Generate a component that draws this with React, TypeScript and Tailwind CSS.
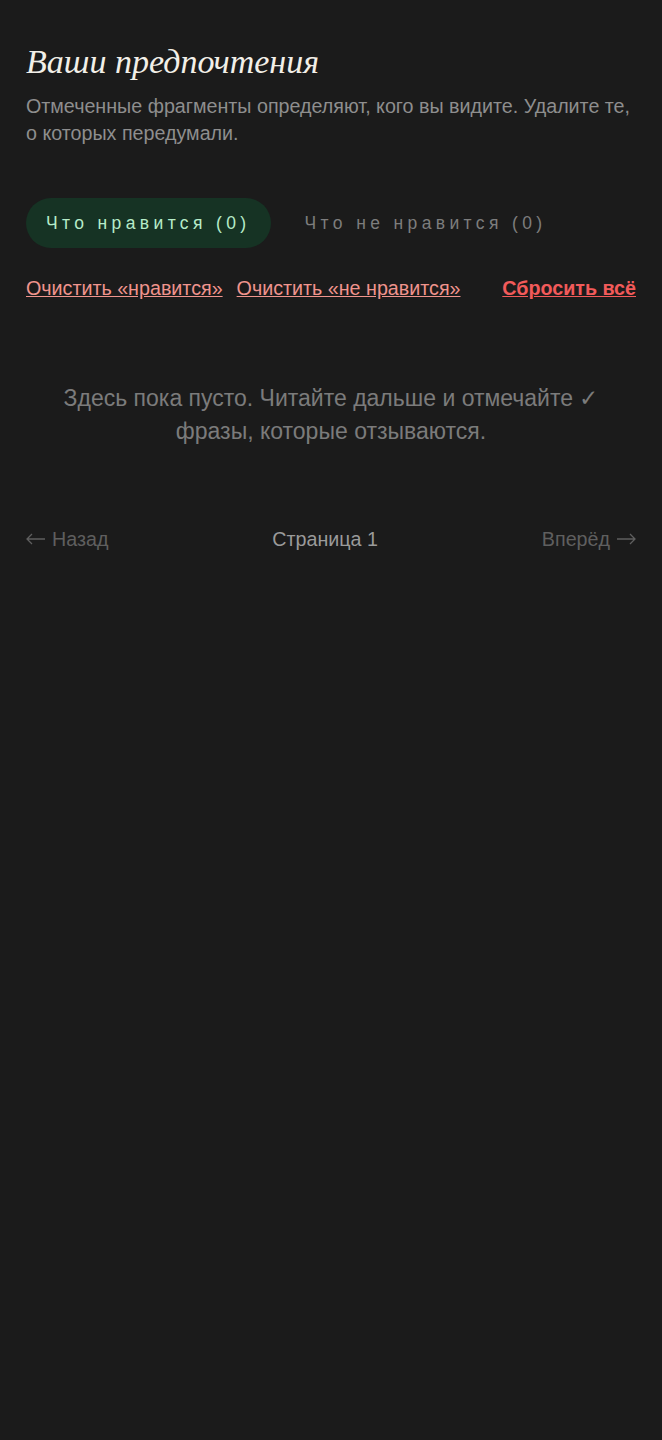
import { useState } from "react";

const Arrow = ({ dir }: { dir: "left" | "right" }) => (
    <svg
        width="20"
        height="12"
        viewBox="0 0 20 12"
        fill="none"
        stroke="currentColor"
        strokeWidth="1.3"
        className={dir === "right" ? "rotate-180" : ""}
    >
        <path d="M1 6h18M6 1L1 6l5 5" />
    </svg>
);

const Preferences = () => {
    const [tab, setTab] = useState<"like" | "dislike">("like");

    return (
        <div className="min-h-[1440px] bg-[#1b1b1b] px-[26px] pt-[42px] font-['Liberation_Sans',Arial,sans-serif]">
            <h1 className="font-['Liberation_Serif',serif] italic font-normal text-[34px] leading-[40px] text-[#f2efe8]">
                Ваши предпочтения
            </h1>
            <p className="mt-[11px] text-[19.7px] leading-[27px] text-[#8e8e8e]">
                Отмеченные фрагменты определяют, кого вы видите. Удалите те, о которых передумали.
            </p>

            <div className="mt-[51px] flex items-center gap-[14px]">
                <button
                    onClick={() => setTab("like")}
                    className={
                        tab === "like"
                            ? "h-[50px] rounded-full bg-[#163324] px-[20px] text-[17.5px] tracking-[0.25em] text-[#b6ecc9]"
                            : "h-[50px] rounded-full px-[20px] text-[17.5px] tracking-[0.25em] text-[#7d7d7d]"
                    }
                >
                    Что нравится (0)
                </button>
                <button
                    onClick={() => setTab("dislike")}
                    className={
                        tab === "dislike"
                            ? "h-[50px] rounded-full bg-[#163324] px-[20px] text-[17.5px] tracking-[0.25em] text-[#b6ecc9]"
                            : "h-[50px] rounded-full px-[20px] text-[17.5px] tracking-[0.25em] text-[#7d7d7d]"
                    }
                >
                    Что не нравится (0)
                </button>
            </div>

            <div className="mt-[28px] flex items-center text-[19.7px] leading-[24px]">
                <a href="#" className="text-[#f0948d] underline">Очистить «нравится»</a>
                <a href="#" className="ml-[14px] text-[#f0948d] underline">Очистить «не нравится»</a>
                <a href="#" className="ml-auto font-bold text-[#f25a5a] underline">Сбросить всё</a>
            </div>

            <p className="mx-auto mt-[82px] max-w-[560px] text-center text-[23px] leading-[33px] text-[#7b7b7b]">
                Здесь пока пусто. Читайте дальше и отмечайте ✓ фразы, которые отзываются.
            </p>

            <div className="mt-[79px] flex items-center justify-between text-[19.7px] leading-[24px]">
                <span className="flex items-center gap-[6px] text-[#5f5f5f]">
                    <Arrow dir="left" />
                    Назад
                </span>
                <span className="text-[#9a9a9a]">Страница 1</span>
                <span className="flex items-center gap-[6px] text-[#5f5f5f]">
                    Вперёд
                    <Arrow dir="right" />
                </span>
            </div>
        </div>
    );
};

export default function App() {
    return <Preferences />;
}
